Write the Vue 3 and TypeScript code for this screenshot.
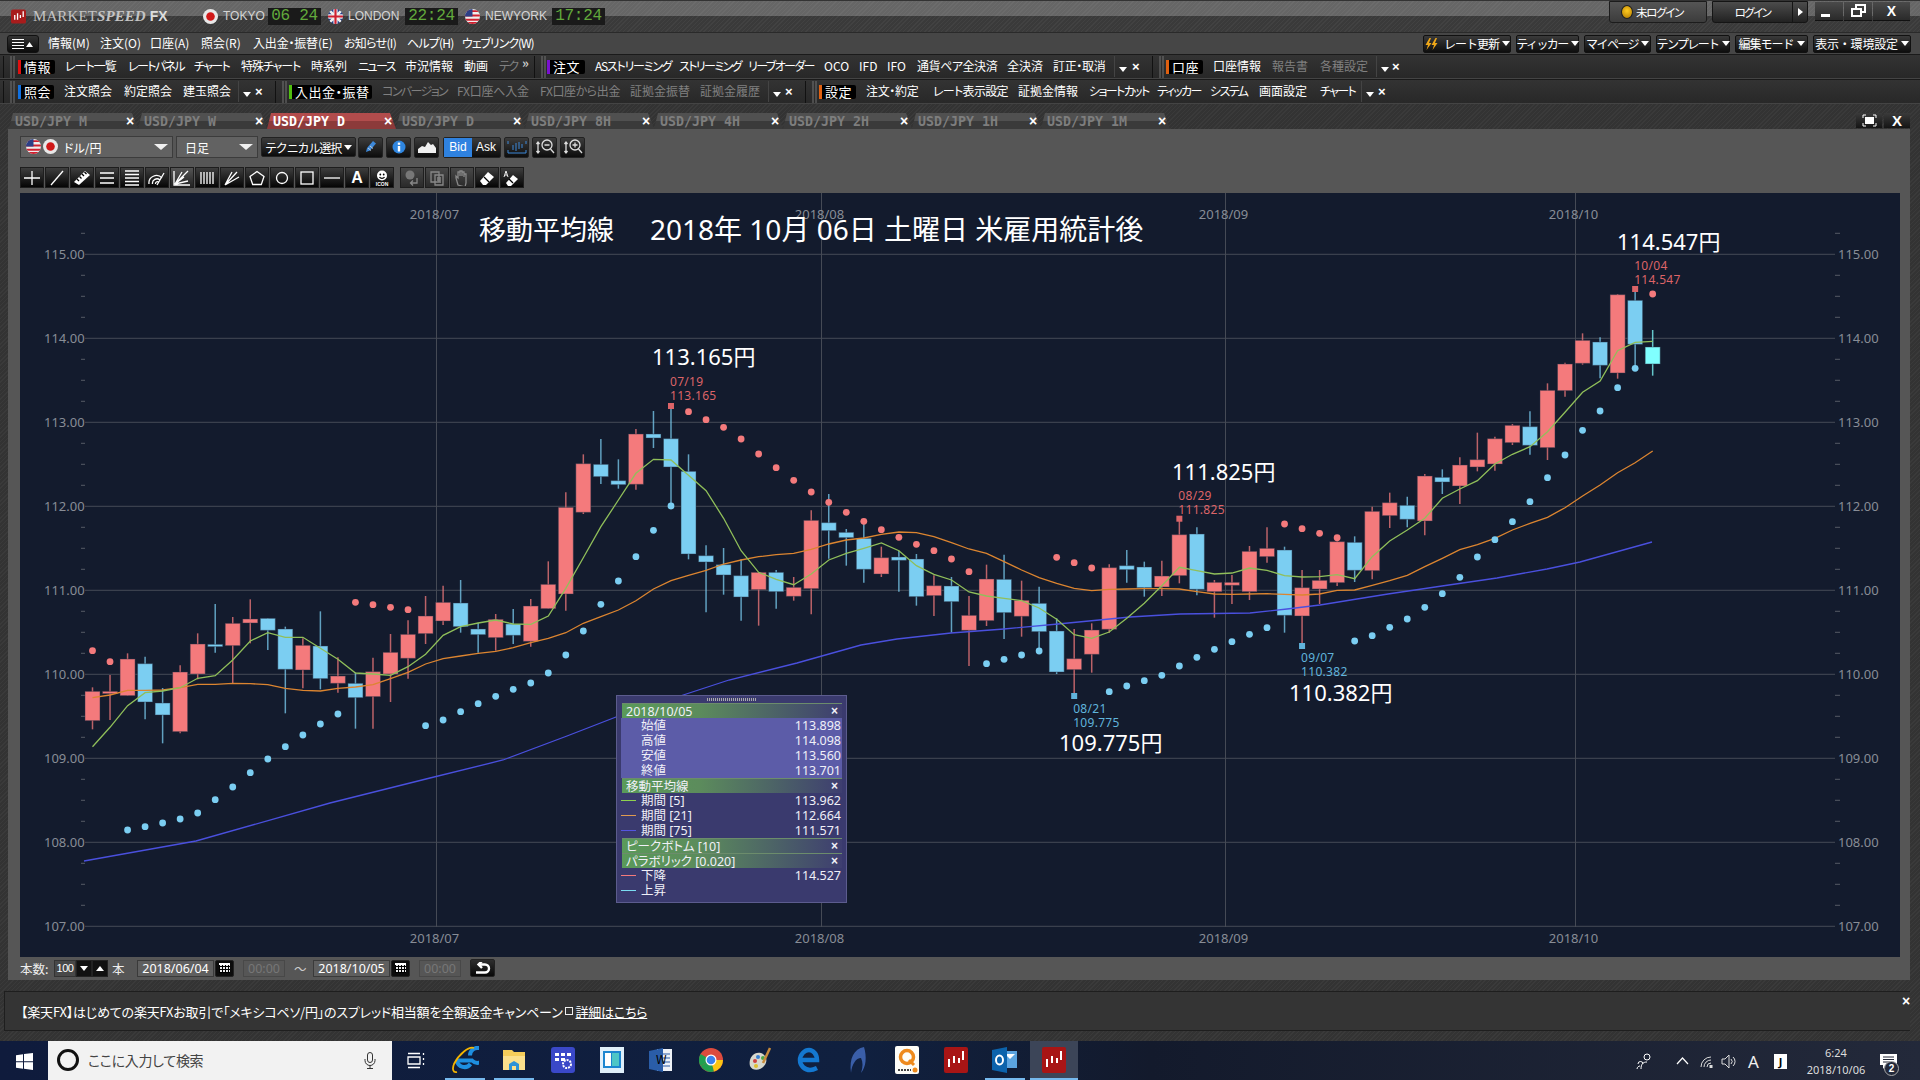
<template>
  <div class="app">
    <!-- タイトルバー -->
    <header class="titlebar">
      <svg class="logo" viewBox="0 0 16 15">
        <rect width="16" height="15" rx="2" fill="#a81c1c" />
        <path d="M4 6v5M7 4v7M10 6v3M13 2v6" stroke="#fff" stroke-width="1.4" />
      </svg>
      <div class="brand">MARKET<i>SPEED</i> <b>FX</b></div>

      <svg class="flag" viewBox="0 0 14 14">
        <rect width="14" height="14" fill="#e8e8e8" />
        <circle cx="7" cy="7" r="4" fill="#d01818" />
      </svg>
      <span class="city c-tokyo">TOKYO</span>
      <span class="clock">06 24</span>

      <svg class="flag" viewBox="0 0 14 14">
        <rect width="14" height="14" fill="#24408e" />
        <path d="M0 0l14 14M14 0L0 14" stroke="#eee" stroke-width="2.4" />
        <path d="M7 0v14M0 7h14" stroke="#eee" stroke-width="4" />
        <path d="M7 0v14M0 7h14" stroke="#cf2030" stroke-width="2" />
      </svg>
      <span class="city c-london">LONDON</span>
      <span class="clock">22:24</span>

      <svg class="flag" viewBox="0 0 14 14">
        <rect width="14" height="14" fill="#eee" />
        <path d="M0 2h14M0 6h14M0 10h14M0 13h14" stroke="#d02030" stroke-width="1.8" />
        <rect width="7" height="7" fill="#2c3f86" />
      </svg>
      <span class="city c-ny">NEWYORK</span>
      <span class="clock">17:24</span>

      <div class="login-state"><span class="lamp"></span><span :style="{ letterSpacing: squeeze('未ログイン') }">未ログイン</span></div>
      <div class="login-btn"><span :style="{ letterSpacing: squeeze('ログイン') }">ログイン</span><em class="play"></em></div>
      <div class="win-btns">
        <span><i class="win-min"></i></span>
        <span>
          <svg width="15" height="13" viewBox="0 0 15 13" fill="none" stroke="#fff" stroke-width="2">
            <path d="M5 4V1h9v7h-4M1 5h9v7H1z" />
          </svg>
        </span>
        <span class="win-x">X</span>
      </div>
    </header>

    <!-- メニューバー -->
    <nav class="menubar">
      <button class="menu-toggle" type="button">
        <svg width="22" height="10" viewBox="0 0 22 10" fill="#fff">
          <path d="M0 0h12v1H0zM0 3h12v1H0zM0 6h12v1H0zM0 9h12v1H0zM14 8l3.500-5 3.500 5z" />
        </svg>
      </button>
      <span
        v-for="m in menus"
        :key="m.t"
        class="menu-item"
        :style="{ width: m.w + 'px', letterSpacing: squeeze(m.t) }"
      >{{ m.t }}</span>
      <div class="menu-right">
        <button v-for="b in rightButtons" :key="b.t" class="drop-btn" type="button" :style="{ width: b.w + 'px' }">
          <svg v-if="b.bolt" class="bolt" width="15" height="14" viewBox="0 0 14 14" fill="#f0a818">
            <path d="M5 1L1 8h2.500L2 13l5-7H4.500L6.500 1zM11 1L7 8h2.500L8 13l5-7h-2.500L12.500 1z" />
          </svg>
          <span :style="{ letterSpacing: squeeze(b.t) }">{{ b.t }}</span><i class="tri"></i>
        </button>
      </div>
    </nav>

    <!-- ツールバー -->
    <div v-for="(row, r) in toolRows" :key="r" class="toolrow" :style="{ paddingLeft: row[0].x + 'px' }">
      <template v-for="(tool, i) in row" :key="i">
        <span
          class="cell"
          :class="tool.k"
          :style="{ width: cellWidth(row, i) + 'px', letterSpacing: tool.k === 'tag' ? undefined : squeeze(tool.t) }"
        >
          <i v-if="tool.k === 'tag'" class="tag-bar" :style="{ background: tool.c }"></i>
          <i v-if="tool.k === 'drop'" class="tri"></i>
          {{ tool.t }}
        </span>
      </template>
    </div>

    <!-- タブ -->
    <div class="tabstrip">
      <div v-for="tab in tabs" :key="tab.id" class="tab" :class="{ active: tab.active }">
        <span>{{ tab.t }}</span><b>×</b>
      </div>
      <div class="tab-tools">
        <span>
          <svg width="15" height="13" viewBox="0 0 15 13" fill="none" stroke="#fff">
            <path d="M1 4V1h3M11 1h3v3M14 9v3h-3M4 12H1V9" />
            <rect x="3" y="3" width="9" height="7" fill="#fff" stroke="none" />
          </svg>
        </span>
        <span class="tab-x">X</span>
      </div>
    </div>

    <!-- チャート -->
    <main class="panel">
      <div class="bar-a">
        <div class="select pair">
          <svg class="flag" viewBox="0 0 14 14">
            <rect width="14" height="14" fill="#eee" />
            <path d="M0 2h14M0 6h14M0 10h14M0 13h14" stroke="#d02030" stroke-width="1.8" />
            <rect width="7" height="7" fill="#2c3f86" />
          </svg>
          <svg class="flag" viewBox="0 0 14 14">
            <rect width="14" height="14" fill="#e8e8e8" />
            <circle cx="7" cy="7" r="4" fill="#d01818" />
          </svg>
          <span class="select-text">ドル/円</span><i class="tri big"></i>
        </div>
        <div class="select term"><span class="select-text">日足</span><i class="tri big"></i></div>
        <button class="tech" type="button"><span :style="{ letterSpacing: squeeze('テクニカル選択') }">テクニカル選択</span><i class="tri"></i></button>
        <button class="ico" type="button">
          <svg width="14" height="14" viewBox="0 0 14 14"><path d="M2 12l1-4 6-7 3 2.500-6 7z" fill="#3d88d8" /><path d="M4 8l3 2.500M6 6l3 2.500" stroke="#bcd" /></svg>
        </button>
        <button class="ico" type="button">
          <svg width="14" height="14" viewBox="0 0 14 14"><circle cx="7" cy="7" r="6.500" fill="#2f86e0" /><rect x="5.800" y="6" width="2.400" height="5.500" fill="#fff" /><rect x="5.800" y="2.600" width="2.400" height="2.200" fill="#fff" /></svg>
        </button>
        <button class="ico" type="button">
          <svg width="18" height="12" viewBox="0 0 18 12"><path d="M0 12V8l4-3 3 1 3-5 3 3 2-1 3 4v5z" fill="#f0f0f0" /></svg>
        </button>
        <div class="bid-ask"><span class="on">Bid</span><span>Ask</span></div>
        <button class="ico" type="button">
          <svg width="20" height="14" viewBox="0 0 20 14" fill="none" stroke="#3d88d8">
            <path d="M1 4V1M19 4V1M1 13h18M1 13v-3M19 13v-3M6 10V5M9 11V3M12 9V2M15 8V4" />
          </svg>
        </button>
        <button class="ico" type="button">
          <svg width="20" height="16" viewBox="0 0 20 16" fill="none" stroke="#ddd" stroke-width="1.300">
            <circle cx="12" cy="6" r="5" /><path d="M9.500 6h5M15.500 10l3.500 4M3 3v11M1.500 5L3 3l1.500 2M1.500 12L3 14l1.500-2" />
          </svg>
        </button>
        <button class="ico" type="button">
          <svg width="20" height="16" viewBox="0 0 20 16" fill="none" stroke="#ddd" stroke-width="1.300">
            <circle cx="12" cy="6" r="5" /><path d="M9.500 6h5M12 3.500v5M15.500 10l3.500 4M3 3v11M1.500 5L3 3l1.500 2M1.500 12L3 14l1.500-2" />
          </svg>
        </button>
      </div>

      <div class="bar-b">
        <button class="draw" type="button"><svg viewBox="0 0 18 16"><path d="M9 1v14M1 8h16" /></svg></button>
        <button class="draw" type="button"><svg viewBox="0 0 18 16"><path d="M3 15L15 1" /></svg></button>
        <button class="draw" type="button">
          <svg viewBox="0 0 18 16"><path d="M1 12L12 1l5 4L6 15z" fill="#fff" stroke="none" /><path d="M4 9l2 2M6.500 6.500l2 2M9 4l2 2M11.500 2l2 2" stroke="#000" /></svg>
        </button>
        <button class="draw" type="button"><svg viewBox="0 0 18 16"><path d="M2 3h14M2 8h14M2 13h14" /></svg></button>
        <button class="draw" type="button"><svg viewBox="0 0 18 16"><path d="M2 1h14M2 4.500h14M2 8h14M2 11.500h14M2 15h14" /></svg></button>
        <button class="draw" type="button">
          <svg viewBox="0 0 18 16"><path d="M1 14a7.500 7.500 0 0 1 13-6M4.500 14a4.500 4.500 0 0 1 7.500-4M7.500 14a2 2 0 0 1 3-2M16 3L9 15" /></svg>
        </button>
        <button class="draw soft" type="button">
          <svg viewBox="0 0 18 16"><path d="M1 1v14h16M2 14L9 2M2 14l9-7M2 14l13-3M2 14L15 1" /></svg>
        </button>
        <button class="draw" type="button"><svg viewBox="0 0 18 16"><path d="M3 2v12M6 2v12M9 2v12M12 2v12M15 2v12" /></svg></button>
        <button class="draw" type="button"><svg viewBox="0 0 18 16"><path d="M2 15L9 2M2 15L14 2M2 15l14-8" /></svg></button>
        <button class="draw" type="button"><svg viewBox="0 0 18 16"><path d="M9 1.500l7 5-2.700 8H4.700L2 6.500z" /></svg></button>
        <button class="draw" type="button"><svg viewBox="0 0 18 16"><circle cx="9" cy="8" r="5.500" /></svg></button>
        <button class="draw" type="button"><svg viewBox="0 0 18 16"><rect x="3" y="2" width="12" height="12" /></svg></button>
        <button class="draw" type="button"><svg viewBox="0 0 18 16"><path d="M1 8h16" /></svg></button>
        <button class="draw letter" type="button">A</button>
        <button class="draw" type="button">
          <svg viewBox="0 0 18 16">
            <circle cx="9" cy="5.500" r="5" fill="#fff" stroke="none" />
            <circle cx="7.300" cy="4.500" r=".9" fill="#000" stroke="none" /><circle cx="10.700" cy="4.500" r=".9" fill="#000" stroke="none" />
            <path d="M6.500 7a3 3 0 0 0 5 0" stroke="#000" />
            <text x="9" y="15.500" class="icon-word">ICON</text>
          </svg>
        </button>
        <button class="draw dim gap" type="button">
          <svg viewBox="0 0 18 16"><circle cx="7" cy="5" r="4.500" fill="#777" stroke="none" /><path d="M14 8v5H8M10 10.500L7.500 13l2.500 2.500" stroke="#888" /></svg>
        </button>
        <button class="draw dim" type="button">
          <svg viewBox="0 0 18 16"><path d="M3 2h8v10H3zM7 5h8v10H7zM9 8h4M9 10h4M9 12h4" stroke="#888" /></svg>
        </button>
        <button class="draw dim" type="button">
          <svg viewBox="0 0 18 16"><path d="M5 15L3 8V6l2 2V2h2v4-5h2v5-4h2v5-3h2v9l-1 4z" stroke="#888" /></svg>
        </button>
        <button class="draw" type="button">
          <svg viewBox="0 0 18 16"><path d="M2 11L10 2l6 5-8 8H5z" fill="#fff" stroke="none" /><path d="M6 7l5 5" stroke="#000" /></svg>
        </button>
        <button class="draw" type="button">
          <svg viewBox="0 0 18 16"><path d="M3 13L10 5l5 4-7 7H5z" fill="#fff" stroke="none" /><path d="M6 9l4 4" stroke="#000" /><path d="M1 7l2-6 2 6M2 5h2" stroke-width=".9" /></svg>
        </button>
      </div>

      <section class="chart">
        <svg class="plot" width="1880" height="764" viewBox="20 193 1880 764">
          <!-- 目盛・グリッド -->
          <g class="grid">
            <line v-for="p in priceLevels" :key="p.v" x1="85" x2="1835" :y1="p.y" :y2="p.y" />
            <line v-for="m in months" :key="m.t" :x1="m.x" :x2="m.x" y1="193" y2="927" />
          </g>
          <g class="minor">
            <template v-for="y in minorTicks" :key="y">
              <line x1="81" x2="85" :y1="y" :y2="y" />
              <line x1="1835" x2="1840" :y1="y" :y2="y" />
            </template>
          </g>
          <g class="axis-text">
            <template v-for="p in priceLevels" :key="p.v">
              <text x="44" :y="p.y + 4.500">{{ p.v }}</text>
              <text x="1838" :y="p.y + 4.500">{{ p.v }}</text>
            </template>
            <template v-for="m in months" :key="m.t">
              <text :x="m.x - 2" y="219" text-anchor="middle">{{ m.t }}</text>
              <text :x="m.x - 2" y="943" text-anchor="middle">{{ m.t }}</text>
            </template>
          </g>

          <!-- ローソク足 -->
          <g v-for="c in candles" :key="c.i">
            <line class="wick" :x1="c.x" :x2="c.x" :y1="c.h" :y2="c.l" :stroke="c.color" />
            <rect class="body" :x="c.x - 7.500" :y="c.t" width="15" :height="c.b - c.t" :fill="c.color" />
          </g>

          <polyline class="ma" stroke="#4a50de" :points="ma75" />
          <polyline class="ma" stroke="#dc8530" :points="ma21" />
          <polyline class="ma" stroke="#90bf5a" :points="ma5" />

          <!-- パラボリック -->
          <circle v-for="d in sarDots" :key="d.x" :cx="d.x" :cy="d.y" r="3.400" :fill="d.color" />

          <!-- ピークボトム -->
          <g v-for="m in markers" :key="m.date">
            <rect :x="m.x - 3" :y="m.y - 3" width="6" height="6" :fill="m.color" />
            <text class="peak" :x="m.x - 1" :y="m.ty" :fill="m.color">{{ m.date }}</text>
            <text class="peak" :x="m.x - 1" :y="m.ty + 14" :fill="m.color">{{ m.price }}</text>
          </g>

          <!-- 書き込み -->
          <text class="note title first" x="479" y="240">移動平均線</text>
          <text class="note title" x="650" y="240">2018年 10月 06日 土曜日 米雇用統計後</text>
          <text v-for="n in notes" :key="n.t" class="note" :x="n.x" :y="n.y">{{ n.t }}</text>
        </svg>

        <!-- データウィンドウ -->
        <div class="data-win">
          <div class="grip-line"></div>
          <template v-for="row in dataRows" :key="row.t">
            <div v-if="row.head" class="win-head"><span>{{ row.t }}</span><b>×</b></div>
            <div v-else class="win-row" :class="{ lit: row.lit }">
              <i v-if="row.c" :style="{ background: row.c }"></i>
              <span>{{ row.t }}</span><em>{{ row.v }}</em>
            </div>
          </template>
        </div>
      </section>

      <div class="bar-c">
        <span class="lbl">本数:</span>
        <div class="count">100</div>
        <button class="step" type="button"><i class="tri"></i></button>
        <button class="step" type="button"><i class="tri flip"></i></button>
        <span class="lbl unit">本</span>
        <div class="date">2018/06/04</div>
        <button class="cal" type="button"><i></i></button>
        <div class="time">00:00</div>
        <span class="lbl tilde">～</span>
        <div class="date">2018/10/05</div>
        <button class="cal" type="button"><i></i></button>
        <div class="time">00:00</div>
        <button class="ret" type="button">
          <svg width="16" height="13" viewBox="0 0 16 13" fill="none" stroke="#fff" stroke-width="2.400">
            <path d="M1 10.500h9a3.700 3.700 0 0 0 0-8H5M7 6L3.500 2.500 7 -1" />
          </svg>
        </button>
      </div>
    </main>

    <!-- ティッカー -->
    <div class="ticker">
      <span>【楽天FX】はじめての楽天FXお取引で「メキシコペソ/円」のスプレッド相当額を全額返金キャンペーン</span>
      <i class="ext"></i>
      <u>詳細はこちら</u>
      <b class="ticker-x">×</b>
    </div>

    <!-- タスクバー -->
    <footer class="taskbar">
      <div class="start">
        <svg width="17" height="17" viewBox="0 0 17 17" fill="#fff"><path d="M0 2.300l7-1v6.900H0zM8 1.100L17 0v8.200H8zM0 9.200h7v6.500l-7-1zM8 9.200h9V17l-9-1.200z" /></svg>
      </div>
      <div class="search">
        <span class="cortana"></span>
        <span class="search-text">ここに入力して検索</span>
        <svg width="12" height="17" viewBox="0 0 12 17" fill="none" stroke="#333"><rect x="3.500" y=".5" width="5" height="10" rx="2.500" /><path d="M1 7v1.500a5 5 0 0 0 10 0V7M6 13.500V16M3 16.500h6" /></svg>
      </div>
      <div class="task-icons">
        <span class="task">
          <svg width="18" height="17" viewBox="0 0 18 17" fill="none" stroke="#fff" stroke-width="1.300"><path d="M1 5h12v7H1zM1 1.500h12M1 15.500h12M16.500 1v2M16.500 6v2M16.500 11v2" /></svg>
        </span>
        <span class="task open">
          <svg width="28" height="28" viewBox="0 0 28 28" fill="none">
            <path d="M6 14.500h15a7.500 7.500 0 1 0-2 -5" stroke="#1e8fe0" stroke-width="4" />
            <path d="M19.500 18a7.500 7.500 0 0 1-13.500-3.500" stroke="#1e8fe0" stroke-width="4" />
            <path d="M23 2C18 0 8 8 3 18c-2 5-1 9 3 8" stroke="#f4b400" stroke-width="1.800" />
          </svg>
        </span>
        <span class="task open">
          <svg width="24" height="22" viewBox="0 0 24 22"><path d="M1 1h9l2 2h11v18H1z" fill="#f5cd5a" /><path d="M1 7h22v14H1z" fill="#fbe08c" /><path d="M7 21v-6l5-3 5 3v6z" fill="#2d93d8" /><rect x="10" y="17" width="4" height="4" fill="#fbe08c" /></svg>
        </span>
        <span class="task">
          <svg width="24" height="26" viewBox="0 0 24 26"><rect width="24" height="26" rx="3" fill="#3a48c8" /><path d="M4 6h4v3H4zM10 6h4v3h-4zM16 6h4v3h-4zM4 11h4v3H4zM10 11h4v3h-4z" fill="#fff" /><circle cx="16" cy="17" r="4" fill="none" stroke="#fff" stroke-width="2" stroke-dasharray="2 1" /></svg>
        </span>
        <span class="task">
          <svg width="24" height="26" viewBox="0 0 24 26"><rect width="24" height="26" fill="#dfeffa" /><rect x="3" y="4" width="18" height="17" fill="#1c86d0" /><rect x="5" y="6" width="6" height="13" fill="#fff" /><rect x="12" y="6" width="7" height="13" fill="#4ec6c6" /></svg>
        </span>
        <span class="task">
          <svg width="24" height="26" viewBox="0 0 24 26"><rect x="8" y="2" width="15" height="22" fill="#eef2f8" /><path d="M12 7h9M12 11h9M12 15h9M12 19h9" stroke="#2a5da8" /><path d="M0 4l14-3v24L0 22z" fill="#2a5da8" /><text x="7" y="17" class="word-w">W</text></svg>
        </span>
        <span class="task">
          <svg width="24" height="24" viewBox="0 0 24 24">
            <circle cx="12" cy="12" r="12" fill="#dd4b3e" />
            <path d="M12 12L1.600 18A12 12 0 0 0 15 23.600z" fill="#21a04f" />
            <path d="M12 12h12a12 12 0 0 1-9 11.600z" fill="#fbc513" />
            <path d="M12 12L1.600 6A12 12 0 0 0 1.600 18z" fill="#21a04f" />
            <circle cx="12" cy="12" r="5.500" fill="#fff" /><circle cx="12" cy="12" r="4.300" fill="#3b82ee" />
          </svg>
        </span>
        <span class="task">
          <svg width="24" height="28" viewBox="0 0 24 28">
            <path d="M2 20C0 12 6 5 13 7c6 2 7 9 3 13-3 4-11 6-14 0z" fill="#d8d8cc" />
            <circle cx="7" cy="15" r="2" fill="#d04040" /><circle cx="10" cy="11" r="2" fill="#3a80d0" /><circle cx="15" cy="12" r="2" fill="#48a848" /><circle cx="8" cy="20" r="2" fill="#e0c030" />
            <path d="M15 17L22 2" stroke="#c88a3a" stroke-width="2.500" />
          </svg>
        </span>
        <span class="task">
          <svg width="24" height="26" viewBox="0 0 24 26" fill="none">
            <path d="M5 13h15c0-6-4-10-8-10S3 7 3 13s5 10 10 10c3 0 5-1 7-2" stroke="#1478d0" stroke-width="4.500" />
          </svg>
        </span>
        <span class="task">
          <svg width="20" height="28" viewBox="0 0 20 28"><path d="M16 1C6 3 1 12 3 27c1-9 5-15 10-15 2 4 2 9 0 15 5-6 6-16 3-26z" fill="#3a5ea8" /></svg>
        </span>
        <span class="task">
          <svg width="24" height="28" viewBox="0 0 24 28"><rect width="24" height="28" rx="2" fill="#fdfdf8" /><circle cx="12" cy="11" r="6.500" fill="none" stroke="#ee8a1c" stroke-width="3.500" /><path d="M14 14l5 5" stroke="#ee8a1c" stroke-width="3" /><path d="M3 24h13" stroke="#444" stroke-width="2" stroke-dasharray="2 1" /><circle cx="20" cy="24" r="2.500" fill="#ee8a1c" /></svg>
        </span>
        <span class="task">
          <svg width="24" height="26" viewBox="0 0 24 26"><rect width="24" height="26" rx="2" fill="#a81515" /><path d="M5 12v8M10 9v7M15 11v5M19 4v9" stroke="#fff" stroke-width="2" /></svg>
        </span>
        <span class="task open">
          <svg width="26" height="28" viewBox="0 0 26 28"><path d="M11 5h14v17H11z" fill="#5ba4e0" /><path d="M13 8h10l-5 5z" fill="#fff" /><path d="M0 4l15-3v26L0 24z" fill="#0c63ac" /><ellipse cx="7.500" cy="14" rx="3.500" ry="4.500" fill="none" stroke="#fff" stroke-width="2" /></svg>
        </span>
        <span class="task open active">
          <svg width="24" height="26" viewBox="0 0 24 26"><rect width="24" height="26" rx="2" fill="#a81515" /><path d="M5 12v8M10 9v7M15 11v5M19 4v9" stroke="#fff" stroke-width="2" /></svg>
        </span>
      </div>
      <div class="tray">
        <svg class="tr-people" width="19" height="17" viewBox="0 0 19 17" fill="none" stroke="#fff"><circle cx="11" cy="4" r="3" /><path d="M5 16c0-5 2-7 6-7M2 11a2.500 2.500 0 1 1 5 0M1 16c0-2 2-3 3-3" /></svg>
        <svg class="tr-caret" width="13" height="8" viewBox="0 0 13 8" fill="none" stroke="#fff" stroke-width="1.200"><path d="M1 7l5.500-6L12 7" /></svg>
        <svg class="tr-wifi" width="16" height="15" viewBox="0 0 16 15" fill="none" stroke="#ddd"><path d="M1 13a10 10 0 0 1 10-10M4 13a7 7 0 0 1 7-7M7 13a4 4 0 0 1 4-4" /><rect x="10" y="11.500" width="2" height="2" fill="#ddd" /></svg>
        <svg class="tr-sound" width="15" height="15" viewBox="0 0 15 15" fill="none" stroke="#ddd"><path d="M1 5h3l4-4v13l-4-4H1zM10 5a3.500 3.500 0 0 1 0 5M12 3a6 6 0 0 1 0 9" /></svg>
        <span class="ime">A</span>
        <span class="ime-j">J</span>
        <div class="tray-clock"><span>6:24</span><span>2018/10/06</span></div>
        <div class="notify">
          <svg width="17" height="15" viewBox="0 0 17 15" fill="#fff"><path d="M0 0h17v11H6l-3 4v-4H0z" /><path d="M3 3h11M3 5.500h11M3 8h7" stroke="#222736" /></svg>
          <span class="badge">2</span>
        </div>
      </div>
    </footer>
  </div>
</template>

<script setup lang="ts">
type Tool = { t: string; x: number; k?: string; c?: string }

// カナが多い文字列ほど詰める(元画面のカナは幅が狭い)
const squeeze = (text: string) => {
  const kana = text.match(/[ァ-ヶーぁ-ん・]/g)?.length ?? 0
  return text ? `${(-1.6 * kana) / text.length}px` : undefined
}

// メニュー
const menus = [
  { t: '情報(M)', w: 52 }, { t: '注文(O)', w: 50 }, { t: '口座(A)', w: 51 }, { t: '照会(R)', w: 52 },
  { t: '入出金・振替(E)', w: 91 }, { t: 'お知らせ(I)', w: 63 }, { t: 'ヘルプ(H)', w: 55 }, { t: 'ウェブリンク(W)', w: 70 },
]

const rightButtons = [
  { t: 'レート更新', w: 88, bolt: true }, { t: 'ティッカー', w: 63 }, { t: 'マイページ', w: 67 },
  { t: 'テンプレート', w: 74 }, { t: '編集モード', w: 73 }, { t: '表示・環境設定', w: 98 },
]

// ツールバー(x は画面上の開始位置)
const toolRows: Tool[][] = [
  [
    { t: '', x: 3, k: 'grip' }, { t: '情報', x: 18, k: 'tag', c: '#e01010' },
    { t: 'レート一覧', x: 65 }, { t: 'レートパネル', x: 128 }, { t: 'チャート', x: 194 }, { t: '特殊チャート', x: 241 },
    { t: '時系列', x: 311 }, { t: 'ニュース', x: 358 }, { t: '市況情報', x: 405 }, { t: '動画', x: 464 },
    { t: 'テク', x: 499, k: 'dim' }, { t: '»', x: 522, k: 'more' },
    { t: '', x: 534, k: 'grip' }, { t: '注文', x: 547, k: 'tag', c: '#7a10d0' },
    { t: 'ASストリーミング', x: 595 }, { t: 'ストリーミング', x: 679 }, { t: 'リーブオーダー', x: 748 },
    { t: 'OCO', x: 824 }, { t: 'IFD', x: 859 }, { t: 'IFO', x: 887 }, { t: '通貨ペア全決済', x: 917 },
    { t: '全決済', x: 1007 }, { t: '訂正・取消', x: 1053 }, { t: '', x: 1114, k: 'drop' }, { t: '×', x: 1132, k: 'close' },
    { t: '', x: 1152, k: 'grip' }, { t: '口座', x: 1166, k: 'tag', c: '#e06010' },
    { t: '口座情報', x: 1213 }, { t: '報告書', x: 1272, k: 'dim' }, { t: '各種設定', x: 1320, k: 'dim' },
    { t: '', x: 1376, k: 'drop' }, { t: '×', x: 1392, k: 'close' },
  ],
  [
    { t: '', x: 3, k: 'grip' }, { t: '照会', x: 18, k: 'tag', c: '#1070e0' },
    { t: '注文照会', x: 64 }, { t: '約定照会', x: 124 }, { t: '建玉照会', x: 183 },
    { t: '', x: 238, k: 'drop' }, { t: '×', x: 255, k: 'close' },
    { t: '', x: 275, k: 'grip' }, { t: '入出金・振替', x: 289, k: 'tag', c: '#50c010' },
    { t: 'コンバージョン', x: 382, k: 'dim' }, { t: 'FX口座へ入金', x: 457, k: 'dim' }, { t: 'FX口座から出金', x: 540, k: 'dim' },
    { t: '証拠金振替', x: 630, k: 'dim' }, { t: '証拠金履歴', x: 700, k: 'dim' },
    { t: '', x: 768, k: 'drop' }, { t: '×', x: 785, k: 'close' },
    { t: '', x: 805, k: 'grip' }, { t: '設定', x: 819, k: 'tag', c: '#e06010' },
    { t: '注文・約定', x: 866 }, { t: 'レート表示設定', x: 933 }, { t: '証拠金情報', x: 1018 }, { t: 'ショートカット', x: 1089 },
    { t: 'ティッカー', x: 1157 }, { t: 'システム', x: 1210 }, { t: '画面設定', x: 1259 }, { t: 'チャート', x: 1320 },
    { t: '', x: 1361, k: 'drop' }, { t: '×', x: 1378, k: 'close' },
  ],
]

const cellWidth = (row: Tool[], i: number) => (row[i + 1] ? row[i + 1].x - row[i].x : 20)

const tabs = ['M', 'W', 'D', 'D', '8H', '4H', '2H', '1H', '1M'].map((s, id) => ({
  id, t: `USD/JPY ${s}`, active: id === 2,
}))

// チャート座標
const priceY = (p: number) => 254.3 + 84 * (115 - p)
const priceLevels = [115, 114, 113, 112, 111, 110, 109, 108, 107].map((p) => ({ v: p.toFixed(2), y: priceY(p) }))
const minorTicks = Array.from({ length: 33 }, (_, i) => priceY(115.25 - i * 0.25)).filter((_, i) => (i - 1) % 4 !== 0)
const months = [
  { t: '2018/07', x: 436.5 }, { t: '2018/08', x: 821.5 }, { t: '2018/09', x: 1225.5 }, { t: '2018/10', x: 1575.5 },
]

const candleX = (i: number) => 92.5 + 17.53 * i

// [高値, 実体上, 実体下, 安値, 陽線=1] 画面上の計測値
const readRows = (top: number, rows: number[][]) =>
  rows.map(([h, t, b, l, up]) => ({ h: top + h / 3, t: top + t / 3, b: top + b / 3, l: top + l / 3, up }))

const ohlc = [
  ...readRows(440, [
    [742, 754, 842, 868, 1], [705, 754, 761, 840, 1], [640, 657, 767, 767, 1], [650, 671, 786, 838, 0],
    [744, 789, 825, 910, 0], [676, 696, 875, 880, 1], [580, 612, 702, 718, 1], [492, 613, 620, 638, 0],
    [531, 550, 617, 730, 1], [478, 537, 549, 610, 1], [535, 535, 571, 630, 0], [560, 567, 688, 820, 0],
    [595, 616, 690, 745, 1], [514, 618, 716, 748, 0], [652, 708, 730, 758, 1], [698, 730, 773, 866, 0],
    [653, 695, 770, 866, 1], [582, 637, 702, 786, 1], [541, 583, 655, 716, 1], [468, 528, 581, 612, 1],
    [437, 487, 543, 555, 1], [420, 489, 560, 578, 0], [548, 567, 584, 638, 0], [522, 538, 593, 632, 1],
    [507, 552, 586, 612, 0], [477, 498, 604, 620, 1],
  ]),
  ...readRows(340, [
    [664, 733, 806, 806, 1], [457, 502, 762, 812, 1], [343, 371, 517, 522, 1], [297, 373, 410, 432, 0],
    [358, 422, 434, 446, 0], [267, 282, 433, 449, 1], [213, 282, 294, 324, 0], [198, 296, 381, 490, 0],
    [343, 394, 642, 658, 0], [616, 647, 666, 817, 0], [624, 674, 705, 764, 0], [658, 707, 771, 842, 0],
    [697, 697, 749, 857, 1], [690, 697, 755, 806, 0], [711, 742, 769, 782, 1], [511, 541, 746, 823, 1],
    [462, 548, 572, 656, 0], [567, 577, 593, 677, 0], [545, 595, 688, 728, 0], [620, 653, 702, 711, 1],
    [632, 651, 661, 755, 0], [642, 657, 770, 797, 0], [706, 737, 767, 828, 1], [711, 738, 785, 878, 0],
    [768, 826, 871, 978, 1], [674, 717, 842, 858, 1], [644, 718, 818, 897, 0], [722, 781, 829, 890, 1],
    [740, 790, 875, 925, 0], [835, 873, 996, 1002, 0], [867, 956, 989, 1065, 1],
  ]),
  ...readRows(440, [
    [550, 570, 643, 698, 1], [373, 383, 568, 578, 1], [330, 377, 389, 428, 0], [365, 381, 443, 470, 0],
    [362, 408, 441, 468, 1], [236, 284, 407, 430, 1], [262, 282, 448, 466, 0], [420, 427, 455, 533, 1],
    [405, 427, 436, 492, 1], [318, 334, 455, 480, 1], [262, 325, 350, 368, 1], [320, 330, 526, 578, 0],
    [390, 443, 528, 618, 1], [390, 421, 447, 492, 1], [300, 305, 428, 438, 1], [289, 307, 391, 426, 0],
    [200, 214, 392, 418, 1], [158, 188, 227, 264, 1], [170, 196, 238, 262, 0], [102, 108, 243, 286, 1],
    [88, 112, 126, 162, 0], [52, 75, 138, 192, 1], [-22, 59, 81, 94, 1], [-10, -4, 72, 92, 1],
  ]),
  ...readRows(220, [
    [612, 616, 668, 675, 1], [574, 620, 676, 704, 0], [490, 511, 683, 720, 1], [428, 432, 512, 530, 1],
    [340, 361, 430, 434, 1], [352, 366, 436, 475, 0], [222, 224, 459, 476, 1], [208, 241, 373, 445, 0],
    [330, 381, 432, 467, 0],
  ]),
]

const RED = '#f47a7c'
const BLUE = '#7bcef2'

const candles = ohlc.map((c, i) => ({
  ...c,
  i,
  x: candleX(i),
  color: i === 89 ? '#80ffff' : c.up ? RED : BLUE,
}))

const toY = (top: number, vals: number[]) => vals.map((v) => top + v / 3)
const toPoints = (ys: number[]) => ys.map((y, i) => `${candleX(i).toFixed(1)},${y.toFixed(1)}`).join(' ')

const ma5 = toPoints([
  ...toY(440, [920, 862, 797, 758, 753, 743, 715, 707, 660, 603, 578, 592, 592, 625, 658, 699, 702, 706, 680, 643, 586, 560, 549, 540, 552, 553]),
  ...toY(340, [828, 745, 653, 560, 480, 400, 358, 360, 406, 452, 535, 632, 697, 718, 734, 702, 660, 640, 625, 609, 632, 677, 703, 720, 756, 768, 775, 782, 804, 838, 884]),
  ...toY(440, [595, 576, 535, 490, 437, 382, 392, 402, 399, 384, 391, 407, 411, 410, 404, 416, 350, 303, 270, 235, 175, 147, 122, 72]),
  ...toY(220, [703, 680, 635, 577, 517, 483, 392, 367, 364]),
])

const ma21 = toPoints([
  ...toY(440, [773, 765, 751, 751, 750, 743, 733, 733, 730, 731, 734, 745, 751, 753, 745, 741, 734, 716, 697, 672, 656, 648, 640, 634, 623, 608]),
  ...toY(340, [895, 878, 850, 830, 810, 782, 747, 722, 706, 691, 672, 660, 650, 644, 640, 628, 612, 600, 594, 583, 576, 578, 590, 608, 627, 640, 665, 690, 713, 730, 745, 752]),
  ...toY(440, [448, 447, 446, 446, 447, 455, 462, 463, 462, 461, 463, 465, 462, 451, 450, 436, 422, 406, 380, 355, 329, 314, 295, 270, 250, 232, 203]),
  ...toY(220, [828, 795, 758, 728, 693]),
])

const ma75 = [
  [84, 861], [196, 841], [330, 803], [430, 778], [503, 760], [567, 736], [616, 717], [729, 680], [797, 663],
  [861, 645], [897, 639], [951, 633], [1004, 629], [1058, 624], [1130, 617], [1180, 614], [1250, 613],
  [1287, 609], [1320, 605], [1357, 599], [1388, 594], [1442, 586], [1497, 578], [1547, 569], [1580, 562], [1652, 542],
].map((p) => p.join(',')).join(' ')

// パラボリック: [開始足, 上端, 値...]
const sarRun = (from: number, top: number, color: string, vals: number[]) =>
  vals.map((v, i) => ({ x: candleX(from + i), y: top + v / 3, color }))

const sarDots = [
  ...sarRun(0, 440, RED, [632, 665]),
  ...sarRun(2, 0, BLUE, [2490, 2480, 2469, 2457, 2439, 2399, 2361, 2318]),
  ...sarRun(10, 440, BLUE, [957, 920, 885, 852, 822]),
  ...sarRun(15, 440, RED, [487, 494, 502, 509]),
  ...sarRun(19, 440, BLUE, [857, 840, 815, 791, 769, 748, 729]),
  ...sarRun(26, 340, BLUE, [999, 945, 873, 793, 723, 650, 571, 498]),
  ...sarRun(34, 340, RED, [215, 239, 262, 297, 342, 383, 421, 456, 487, 517, 544, 569, 592, 613, 632, 657, 695]),
  ...sarRun(51, 340, BLUE, [971, 958, 945, 933]),
  ...sarRun(55, 340, RED, [652, 668, 684]),
  ...sarRun(58, 440, BLUE, [755, 738, 722, 706, 678, 652, 628, 605, 583, 563]),
  ...sarRun(68, 440, RED, [252, 266, 280, 293]),
  ...sarRun(72, 440, BLUE, [603, 587, 562, 537, 502, 461, 412, 351, 299, 245, 185]),
  ...sarRun(83, 220, BLUE, [773, 705, 631, 573, 503, 445]),
  ...sarRun(89, 220, RED, [222]),
]

const markers = [
  { date: '07/19', price: '113.165', x: candleX(33), y: 406, ty: 386, color: '#dc6468' },
  { date: '08/21', price: '109.775', x: candleX(56), y: 696, ty: 713, color: '#60b4dc' },
  { date: '08/29', price: '111.825', x: candleX(62), y: 518.7, ty: 500, color: '#dc6468' },
  { date: '09/07', price: '110.382', x: candleX(69), y: 646, ty: 662, color: '#60b4dc' },
  { date: '10/04', price: '114.547', x: candleX(88), y: 289, ty: 270, color: '#dc6468' },
]

const notes = [
  { t: '113.165円', x: 652, y: 365 },
  { t: '111.825円', x: 1172, y: 480 },
  { t: '110.382円', x: 1289, y: 701 },
  { t: '109.775円', x: 1059, y: 751 },
  { t: '114.547円', x: 1617, y: 250 },
]

const dataRows = [
  { t: '2018/10/05', head: true },
  { t: '始値', v: '113.898', lit: true },
  { t: '高値', v: '114.098', lit: true },
  { t: '安値', v: '113.560', lit: true },
  { t: '終値', v: '113.701', lit: true },
  { t: '移動平均線', head: true },
  { t: '期間 [5]', v: '113.962', c: '#8fd14f' },
  { t: '期間 [21]', v: '112.664', c: '#e09a50' },
  { t: '期間 [75]', v: '111.571', c: '#5555e0' },
  { t: 'ピークボトム [10]', head: true },
  { t: 'パラボリック [0.020]', head: true },
  { t: '下降', v: '114.527', c: '#f47a7c' },
  { t: '上昇', c: '#7bdcf2' },
]
</script>

<style>
html, body {
  margin: 0;
  background: #333;
}
</style>

<style scoped>
.app {
  width: 1920px;
  height: 1080px;
  overflow: hidden;
  display: flex;
  flex-direction: column;
  background: repeating-linear-gradient(135deg, #3a3a3a 0 1px, #333 1px 3px);
  font-family: "Noto Sans CJK JP", "Liberation Sans", sans-serif;
  font-feature-settings: "palt";
  color: #fff;
  font-size: 12px;
}

button {
  padding: 0;
  font-family: inherit;
  color: inherit;
}

i, em {
  font-style: normal;
}

/* タイトルバー */
.titlebar {
  height: 32px;
  flex: none;
  display: flex;
  align-items: center;
  padding-left: 11px;
  box-sizing: border-box;
  border-top: 1px solid #333;
  background:
    repeating-linear-gradient(135deg, rgba(255, 255, 255, .04) 0 1px, transparent 1px 3px),
    linear-gradient(#666 0 15px, #3a3a3a 15px);
}

.logo {
  width: 15px;
  height: 15px;
  margin-top: -1px;
}

.brand {
  margin-left: 7px;
  margin-right: 14px;
  width: 156px;
  flex: none;
  font-family: "Liberation Serif", serif;
  font-size: 15px;
  letter-spacing: .1px;
  color: #c4c4c4;
  margin-top: -1px;
  white-space: nowrap;
}

.brand i {
  font-style: italic;
  font-weight: bold;
}

.brand b {
  font-family: "Liberation Sans", sans-serif;
  font-size: 14px;
  color: #ddd;
}

.flag {
  width: 15px;
  height: 15px;
  border-radius: 50%;
  flex: none;
  margin-top: -1px;
}

.city {
  margin: -1px 0 0 5px;
  flex: none;
  box-sizing: border-box;
  font-family: "Liberation Sans", sans-serif;
  font-size: 12px;
  color: #d4d4d4;
}

.c-tokyo {
  width: 45px;
}

.c-london {
  width: 57px;
}

.c-ny {
  width: 67px;
}

.clock {
  width: 53px;
  height: 17px;
  flex: none;
  margin: -1px 7px 0 0;
  text-align: center;
  background: #1a1a1a;
  color: #62a93c;
  font-family: "Liberation Mono", monospace;
  font-size: 16px;
  line-height: 17px;
  letter-spacing: -.3px;
}

.login-state {
  margin-left: auto;
  width: 98px;
  height: 22px;
  margin-top: -9px;
  box-sizing: border-box;
  display: flex;
  align-items: center;
  gap: 3px;
  padding-left: 11px;
  font-size: 11.5px;
  background: linear-gradient(#555, #3c3c3c);
  border: 1px solid #1c1c1c;
  border-radius: 0 0 3px 3px;
}

.lamp {
  width: 12px;
  height: 14px;
  border-radius: 50%;
  background: radial-gradient(circle at 50% 40%, #ffcb20, #b07800);
  border: 1px solid #222;
  box-sizing: border-box;
}

.login-btn {
  width: 96px;
  height: 22px;
  margin: -9px 7px 0 5px;
  display: flex;
  box-sizing: border-box;
  background: linear-gradient(#4c4c4c, #222);
  border: 1px solid #151515;
  border-radius: 0 0 3px 3px;
}

.login-btn span {
  flex: 1;
  text-align: center;
  font-size: 11.5px;
  line-height: 20px;
  border-right: 1px solid #151515;
}

.play {
  width: 14px;
  position: relative;
}

.play::after {
  content: "";
  position: absolute;
  left: 5px;
  top: 6px;
  border: 4px solid transparent;
  border-left: 5px solid #fff;
  border-right: 0;
}

.win-btns {
  display: flex;
  height: 19px;
  margin: -11px 10px 0 0;
  gap: 1px;
}

.win-btns span {
  width: 28px;
  display: flex;
  align-items: center;
  justify-content: center;
  background: linear-gradient(#4a4a4a, #2a2a2a);
  border-bottom: 1px solid #111;
  position: relative;
}

.win-min {
  position: absolute;
  left: 6px;
  bottom: 3px;
  width: 9px;
  height: 3px;
  background: #fff;
}

.win-btns .win-x {
  width: 37px;
  font: bold 14px "Liberation Sans", sans-serif;
}

/* メニューバー */
.menubar {
  height: 22px;
  flex: none;
  display: flex;
  align-items: center;
  padding-left: 7px;
  background: #464646;
  border-top: 1px solid #2a2a2a;
  box-sizing: border-box;
}

.menu-toggle {
  width: 32px;
  height: 18px;
  margin-right: 9px;
  background: linear-gradient(#333, #0c0c0c);
  border: 1px solid #111;
  border-radius: 3px;
  display: flex;
  align-items: center;
  justify-content: center;
}

.menu-item {
  white-space: nowrap;
  font-size: 12px;
  margin-top: -2px;
}

.menu-right {
  margin-left: auto;
  margin-right: 9px;
  display: flex;
  gap: 5px;
}

.drop-btn {
  height: 18px;
  box-sizing: border-box;
  flex: none;
  display: flex;
  align-items: center;
  justify-content: center;
  gap: 3px;
  white-space: nowrap;
  font-size: 12px;
  background: linear-gradient(#3a3a3a, #0e0e0e);
  border: 1px solid #111;
  border-radius: 2px;
}

.bolt {
  flex: none;
  margin-right: 2px;
}

.tri {
  display: inline-block;
  border: 4px solid transparent;
  border-top: 5px solid #fff;
  border-bottom: 0;
}

.tri.big {
  border-width: 6px 7px 0;
  border-top-color: #f0f0f0;
  border-bottom: 0;
}

.tri.flip {
  transform: rotate(180deg);
}

/* ツールバー */
.toolrow {
  height: 25px;
  flex: none;
  display: flex;
  align-items: center;
  box-sizing: border-box;
  background: linear-gradient(#333, #282828);
  border-top: 1px solid #1a1a1a;
  border-bottom: 1px solid #444;
}

.cell {
  flex: none;
  white-space: nowrap;
  font-size: 12px;
  line-height: 20px;
  box-sizing: border-box;
  position: relative;
  margin-top: -2px;
}

.dim {
  color: #808080;
}

.more {
  font-size: 13px;
  font-weight: bold;
  line-height: 12px;
  align-self: flex-start;
  margin-top: 2px;
  color: #ccc;
}

.drop {
  padding-left: 4px;
  border-left: 1px solid #444;
  padding-top: 1px;
  margin-top: 0;
}

.close {
  font-weight: bold;
  font-family: "Liberation Sans", sans-serif;
  font-size: 13px;
  margin-top: 0;
}

.grip {
  height: 22px;
  margin-top: 0;
  background:
    radial-gradient(circle, #777 .6px, transparent .8px) 6px 0 / 2px 2px repeat-y,
    radial-gradient(circle, #777 .6px, transparent .8px) 9px 0 / 2px 2px repeat-y;
  border-left: 1px solid #111;
}

.tag {
  padding-left: 6px;
  z-index: 0;
  font-size: 13px;
  letter-spacing: .5px;
  margin-top: 0;
}

.tag::before {
  content: "";
  position: absolute;
  left: 0;
  top: 3px;
  bottom: 3px;
  right: 10px;
  background: #000;
  z-index: -1;
  border-radius: 0 2px 2px 0;
}

.tag-bar {
  position: absolute;
  left: 0;
  top: 3px;
  bottom: 3px;
  width: 3px;
}

/* タブ */
.tabstrip {
  height: 22px;
  margin-top: 3px;
  flex: none;
  display: flex;
  align-items: flex-end;
  padding-left: 9px;
  margin-left: 0;
}

.tab {
  width: 129px;
  height: 16px;
  flex: none;
  position: relative;
  background: linear-gradient(#505050 0 8px, #3a3a3a 8px);
  clip-path: polygon(4px 0, calc(100% - 6px) 0, 100% 100%, 0 100%);
  display: flex;
  align-items: center;
  padding-left: 6px;
  box-sizing: border-box;
  font: bold 13.3px "DejaVu Sans Mono", monospace;
  color: #7e7e7e;
}

.tab b {
  position: absolute;
  left: 117px;
  top: 0;
  color: #fff;
  font: bold 14px/16px "Liberation Sans", sans-serif;
}

.tab.active {
  background: linear-gradient(#b24c4c 0 8px, #8c3a3a 8px);
  color: #fff;
}

.tab-tools {
  margin-left: auto;
  margin-right: 10px;
  display: flex;
  gap: 2px;
  padding-bottom: 1px;
}

.tab-tools span {
  width: 26px;
  height: 15px;
  display: flex;
  align-items: center;
  justify-content: center;
  background: linear-gradient(#3a3a3a, #151515);
}

.tab-x {
  font: bold 15px "Liberation Sans", sans-serif;
}

/* パネル */
.panel {
  height: 851px;
  flex: none;
  margin: 0 10px 0 8px;
  padding: 0 10px 0 12px;
  background: #565656;
  box-sizing: border-box;
  display: flex;
  flex-direction: column;
}

.bar-a {
  height: 22px;
  margin-top: 7px;
  flex: none;
  display: flex;
  align-items: center;
}

.select {
  height: 22px;
  margin-right: 3px;
  box-sizing: border-box;
  background: #626262;
  border: 1px solid #3c3c3c;
  display: flex;
  align-items: center;
  padding: 0 4px 0 5px;
  position: relative;
  font-size: 12px;
}

.pair {
  width: 153px;
  gap: 2px;
}

.term {
  width: 82px;
}

.select-text {
  margin-left: 3px;
}

.pair .select-text {
  margin-left: 4px;
}

.select .tri {
  margin-left: auto;
}

.tech {
  width: 95px;
  height: 20px;
  margin-right: 2px;
  background: linear-gradient(#3c3c3c, #0c0c0c);
  border: 1px solid #222;
  border-radius: 2px;
  font-size: 12px;
  white-space: nowrap;
  display: flex;
  align-items: center;
  justify-content: center;
  gap: 3px;
}

.ico {
  width: 25px;
  height: 21px;
  margin-right: 3px;
  flex: none;
  background: linear-gradient(#3c3c3c, #0c0c0c);
  border: 1px solid #222;
  border-radius: 2px;
  display: flex;
  align-items: center;
  justify-content: center;
}

.bid-ask {
  width: 58px;
  height: 21px;
  flex: none;
  margin: 0 3px 0 1px;
  box-sizing: border-box;
  display: flex;
  border: 1px solid #222;
  border-radius: 2px;
  background: linear-gradient(#3c3c3c, #0c0c0c);
  font: 12px/19px "Liberation Sans", sans-serif;
}

.bid-ask span {
  flex: 1;
  text-align: center;
}

.bid-ask .on {
  background: #2f82e0;
}

.bar-b {
  height: 21px;
  margin-top: 9px;
  flex: none;
  display: flex;
  gap: 1px;
}

.draw {
  width: 24px;
  height: 21px;
  flex: none;
  box-sizing: border-box;
  background: linear-gradient(#3e3e3e, #050505);
  border: 1px solid #1e1e1e;
  display: flex;
  align-items: center;
  justify-content: center;
}

.draw svg {
  width: 18px;
  height: 16px;
  fill: none;
  stroke: #fff;
  stroke-width: 1.3;
}

.soft {
  background: linear-gradient(#555, #222);
}

.dim.draw {
  background: linear-gradient(#484848, #2a2a2a);
}

.gap {
  margin-left: 5px;
}

.letter {
  font: bold 16px "Liberation Sans", sans-serif;
}

.icon-word {
  fill: #fff;
  stroke: none;
  font: bold 5px "Liberation Sans", sans-serif;
  text-anchor: middle;
}

/* チャート */
.chart {
  width: 1880px;
  height: 764px;
  flex: none;
  margin-top: 5px;
  position: relative;
  background: #131b2d;
}

.plot {
  display: block;
}

.grid line {
  stroke: #454a55;
  stroke-width: 1;
}

.minor line {
  stroke: #555a64;
}

.axis-text text {
  fill: #888d96;
  font: 13px "Noto Sans", sans-serif;
}

.wick {
  stroke-width: 1.5;
  opacity: .75;
}

.body {
  stroke: rgba(40, 50, 70, .45);
  stroke-width: 1;
}

.ma {
  fill: none;
  stroke-width: 1.3;
}

.peak {
  font: 12px "Noto Sans", sans-serif;
  letter-spacing: .3px;
}

.note {
  fill: #fff;
  font: 22px "Noto Sans", "Noto Sans CJK JP", sans-serif;
}

.title {
  font-size: 28px;
}

.title.first {
  font-size: 27px;
}

.data-win {
  position: absolute;
  left: 596px;
  top: 502px;
  width: 231px;
  height: 208px;
  box-sizing: border-box;
  padding: 7px 4px 0 5px;
  background: #3a3a6e;
  border: 1px solid #5c5c8e;
  font-size: 12.5px;
  line-height: 15px;
  font-family: "Noto Sans", "Noto Sans CJK JP", sans-serif;
  color: #f0f0f8;
}

.grip-line {
  position: absolute;
  left: 90px;
  top: 2px;
  width: 50px;
  height: 3px;
  background: repeating-linear-gradient(90deg, #aaa 0 1px, transparent 1px 2px);
}

.win-head {
  height: 15px;
  margin-left: 0;
  padding: 0 4px;
  display: flex;
  justify-content: space-between;
  background: linear-gradient(90deg, #5a9a5a 0, #5c8c5c 35%, #3e3e70 100%);
  border-top: 1px solid #6c8c6c;
  box-sizing: border-box;
  white-space: nowrap;
}

.win-head b {
  font: bold 12px/14px "Liberation Sans", sans-serif;
}

.win-row {
  height: 15px;
  margin-left: -1px;
  position: relative;
  display: flex;
  justify-content: space-between;
  padding: 0 1px 0 20px;
}

.win-row.lit {
  background: #5c5ca8;
}

.win-row i {
  position: absolute;
  left: 0;
  top: 7px;
  width: 15px;
  height: 1px;
}

/* 下部バー */
.bar-c {
  height: 22px;
  flex: none;
  display: flex;
  align-items: center;
}

.lbl {
  font-size: 12.5px;
  color: #eee;
  width: 34px;
}

.unit {
  width: 25px;
  margin-left: 4px;
}

.tilde {
  width: 19px;
  margin-left: 9px;
  color: #ccc;
}

.count {
  width: 22px;
  height: 17px;
  box-sizing: border-box;
  background: #484848;
  border: 1px solid #333;
  font: 11px/15px "Liberation Sans", sans-serif;
  text-align: center;
  letter-spacing: -.5px;
}

.step {
  width: 16px;
  height: 17px;
  flex: none;
  background: #111;
  border: 1px solid #222;
  display: flex;
  align-items: center;
  justify-content: center;
}

.date {
  width: 77px;
  height: 17px;
  box-sizing: border-box;
  background: #5f5f5f;
  border: 1px solid #3a3a3a;
  font: 12.5px/15px "Noto Sans", sans-serif;
  text-align: center;
}

.cal {
  width: 19px;
  height: 17px;
  margin: 0 9px 0 1px;
  flex: none;
  background: #0c0c0c;
  border: 1px solid #222;
  border-radius: 2px;
  display: flex;
  align-items: center;
  justify-content: center;
}

.cal i {
  width: 11px;
  height: 10px;
  background:
    repeating-linear-gradient(0deg, #000 0 1px, transparent 1px 3px),
    repeating-linear-gradient(90deg, #000 0 1px, transparent 1px 3px),
    #eee;
  border-top: 2px solid #fff;
  box-sizing: border-box;
}

.time {
  width: 42px;
  height: 17px;
  box-sizing: border-box;
  background: #565656;
  border: 1px solid #484848;
  color: #777;
  font: 12.5px/15px "Noto Sans", sans-serif;
  text-align: center;
}

.ret {
  width: 25px;
  height: 18px;
  margin-left: 9px;
  background: linear-gradient(#2e2e2e, #080808);
  border: 1px solid #222;
  border-radius: 2px;
  display: flex;
  align-items: center;
  justify-content: center;
}

/* ティッカー */
.ticker {
  height: 40px;
  flex: none;
  margin: 11px 10px 10px 4px;
  padding-left: 16px;
  box-sizing: border-box;
  display: flex;
  align-items: center;
  position: relative;
  background: #343434;
  border: 1px solid #1e1e1e;
  border-right: 0;
  font-size: 13px;
  letter-spacing: -.2px;
  white-space: nowrap;
}

.ext {
  width: 6px;
  height: 6px;
  margin: 0 2px 0 3px;
  border: 1px solid #eee;
}

.ticker-x {
  position: absolute;
  right: 0;
  top: 1px;
  font: bold 14px "Liberation Sans", sans-serif;
}

/* タスクバー */
.taskbar {
  height: 40px;
  flex: none;
  display: flex;
  background: linear-gradient(90deg, #0f1b3c, #10203f 45%, #131a2c 60%, #23293a);
}

.start {
  width: 48px;
  display: flex;
  align-items: center;
  justify-content: center;
}

.search {
  width: 344px;
  background: #f2f2f2;
  display: flex;
  align-items: center;
  padding: 0 16px 2px 9px;
  box-sizing: border-box;
  color: #333;
}

.cortana {
  width: 22px;
  height: 22px;
  box-sizing: border-box;
  border: 3px solid #111;
  border-radius: 50%;
}

.search-text {
  flex: 1;
  margin-left: 9px;
  font-size: 14px;
  color: #444;
  letter-spacing: -.3px;
}

.task-icons {
  display: flex;
}

.task {
  width: 48px;
  margin-right: 1.100px;
  height: 40px;
  box-sizing: border-box;
  padding-bottom: 2px;
  display: flex;
  align-items: center;
  justify-content: center;
  position: relative;
}

.task.open::after {
  content: "";
  position: absolute;
  left: 4px;
  right: 4px;
  bottom: 0;
  height: 3px;
  background: #76b9ed;
}

.task.active {
  background: #3c4558;
}

.task.active::after {
  left: 0;
  right: 0;
}

.tray {
  margin-left: auto;
  display: flex;
  align-items: center;
  padding-right: 23px;
  font-family: "Noto Sans", sans-serif;
}

.tr-caret {
  margin-left: 21px;
}

.tr-wifi {
  margin-left: 11px;
}

.tr-sound {
  margin-left: 5px;
}

.ime {
  margin-left: 12px;
  width: 11px;
  font-size: 17px;
  color: #f0f0f0;
}

.ime-j {
  margin-left: 15px;
  width: 13px;
  height: 15px;
  background: #fff;
  color: #000;
  font-size: 11px;
  font-weight: bold;
  line-height: 15px;
  text-align: center;
}

.tray-clock {
  width: 60px;
  margin-left: 19px;
  display: flex;
  flex-direction: column;
  align-items: center;
  gap: 3px;
  font-size: 11px;
  line-height: 14px;
  color: #ddd;
}

.notify {
  position: relative;
  display: flex;
  margin-left: 14px;
}

.badge {
  position: absolute;
  left: 4px;
  top: 7px;
  width: 13px;
  height: 13px;
  border: 1px solid #aaa;
  border-radius: 50%;
  background: #23293a;
  font: bold 10px/13px "Liberation Sans", sans-serif;
  text-align: center;
}
</style>
